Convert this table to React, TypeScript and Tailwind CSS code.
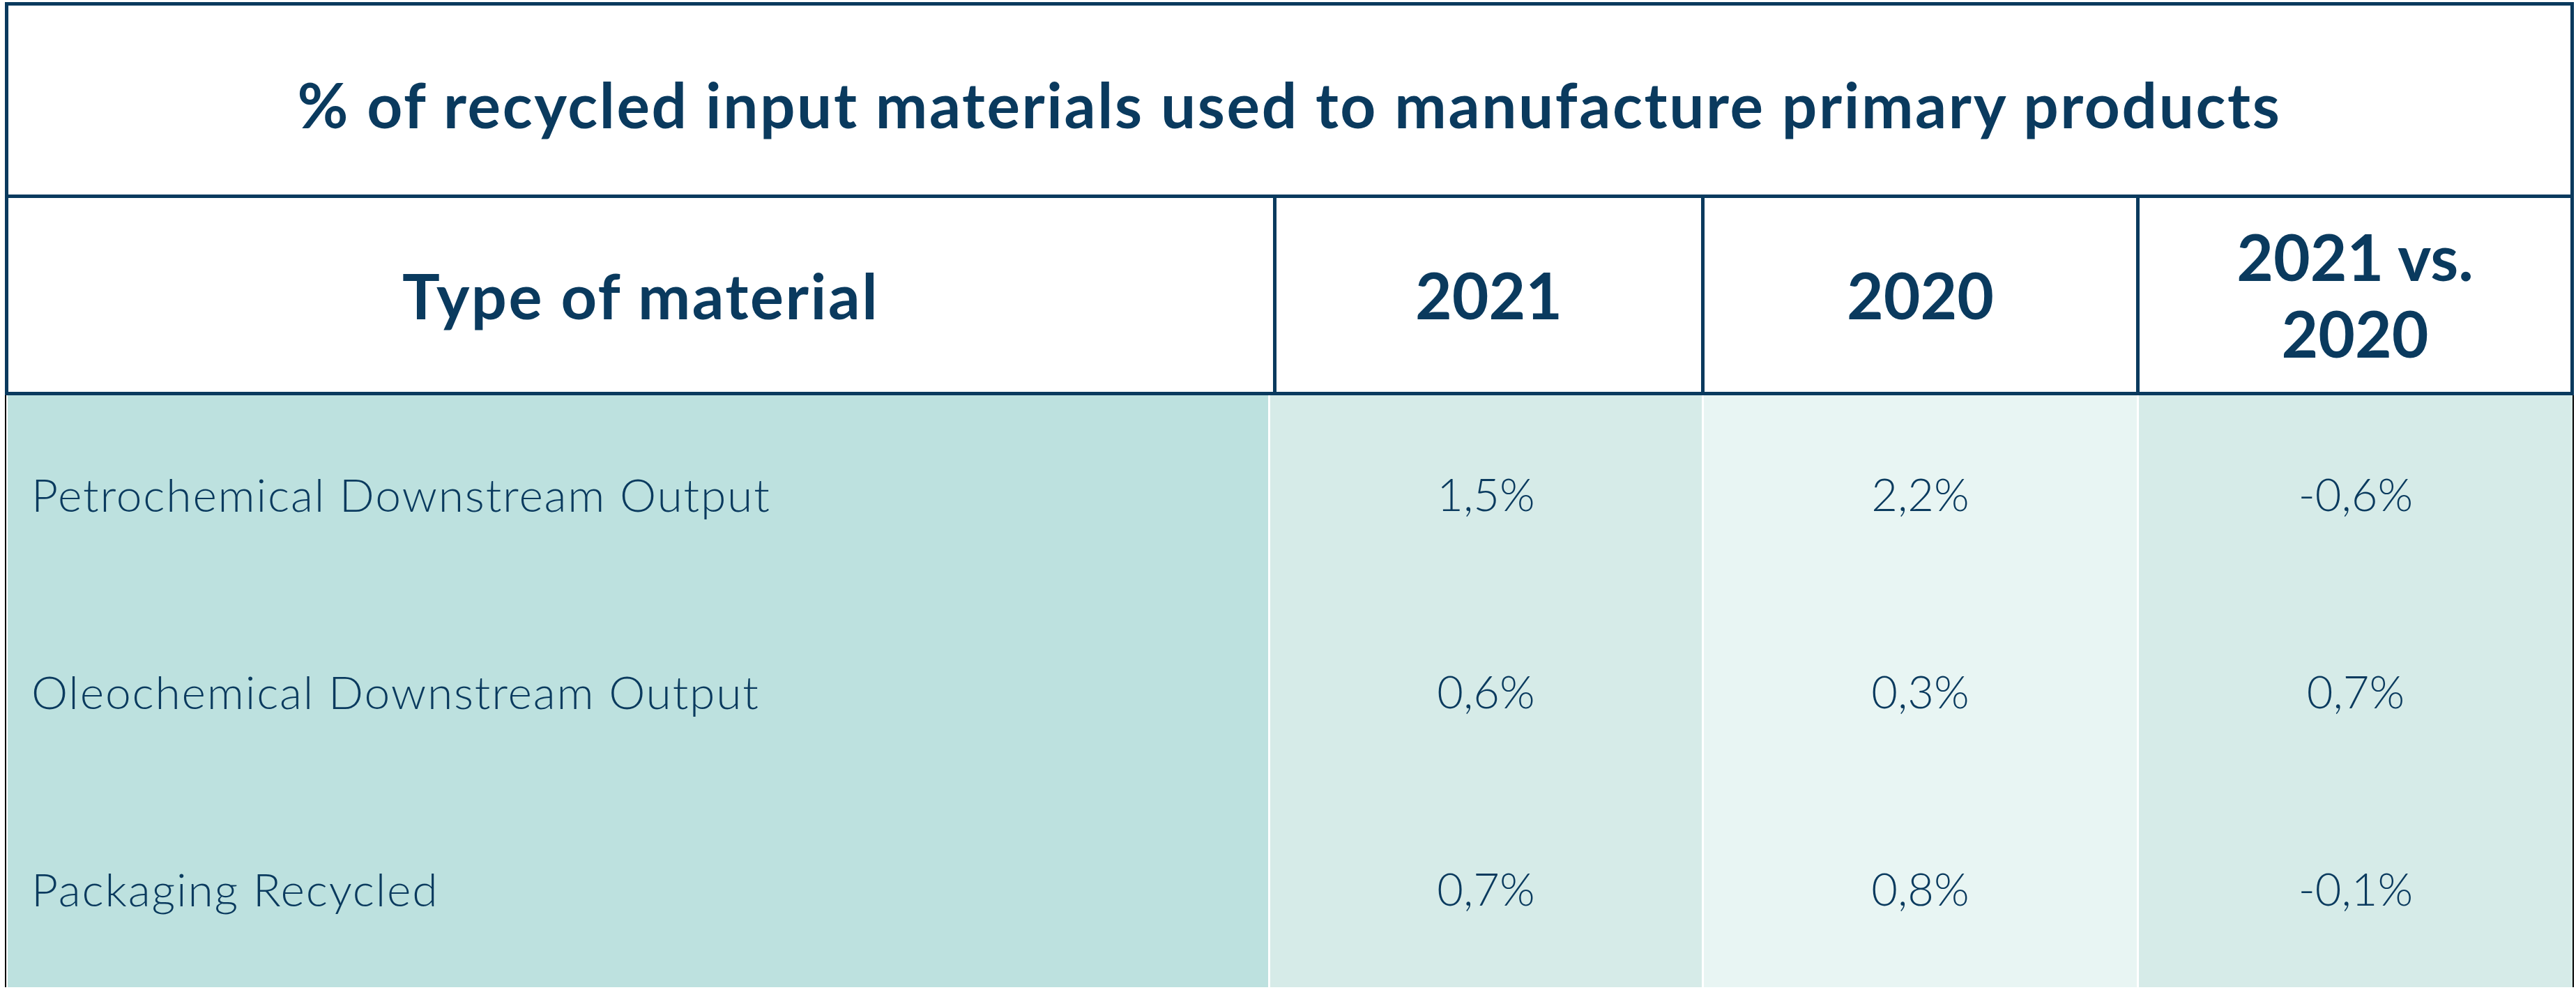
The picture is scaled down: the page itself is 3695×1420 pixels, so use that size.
const rows = [
  { label: "Petrochemical Downstream Output", y2021: "1,5%", y2020: "2,2%", diff: "-0,6%" },
  { label: "Oleochemical Downstream Output", y2021: "0,6%", y2020: "0,3%", diff: "0,7%" },
  { label: "Packaging Recycled", y2021: "0,7%", y2020: "0,8%", diff: "-0,1%" },
];

export default function App() {
  return (
    <div className="w-[3695px] h-[1420px] bg-white overflow-hidden pl-[7px] pt-[3px] font-['Lato',sans-serif] text-[#0a3a5e]">
      <div className="w-[3685px]">
        {/* Title + header, framed in navy */}
        <div className="border-[5px] border-[#0a3a5e]">
          <div className="h-[276px] flex items-center justify-center border-b-[5px] border-[#0a3a5e] pt-[12px]">
            <h1 className="text-[89px] font-bold tracking-[2.6px]">
              % of recycled input materials used to manufacture primary products
            </h1>
          </div>
          <div className="grid grid-cols-[1814px_614px_624px_1fr] h-[278px]">
            <div className="flex items-center justify-center text-[90px] font-bold tracking-[2.5px]">Type of material</div>
            <div className="flex items-center justify-center border-l-[5px] border-[#0a3a5e] text-[91px] font-bold">2021</div>
            <div className="flex items-center justify-center border-l-[5px] border-[#0a3a5e] text-[91px] font-bold">2020</div>
            <div className="flex items-center justify-center border-l-[5px] border-[#0a3a5e] text-[91px] font-bold leading-[110px] text-center">
              2021 vs.<br />2020
            </div>
          </div>
        </div>

        {/* Data rows */}
        <div className="grid grid-cols-[1808px_619px_621px_1fr] gap-x-[3px] bg-white border-x-2 border-black pl-[2px]">
          {rows.map((r) => (
            <div key={r.label} className="contents">
              <div className="h-[283px] bg-[#bde1df] flex items-center pl-[34px] text-[66px] font-light tracking-[1.8px]">{r.label}</div>
              <div className="h-[283px] bg-[#d6ebe8] flex items-center justify-center text-[65px] font-light">{r.y2021}</div>
              <div className="h-[283px] bg-[#e8f5f3] flex items-center justify-center text-[65px] font-light">{r.y2020}</div>
              <div className="h-[283px] bg-[#d6ebe8] flex items-center justify-center text-[65px] font-light">{r.diff}</div>
            </div>
          ))}
        </div>
      </div>
    </div>
  );
}
